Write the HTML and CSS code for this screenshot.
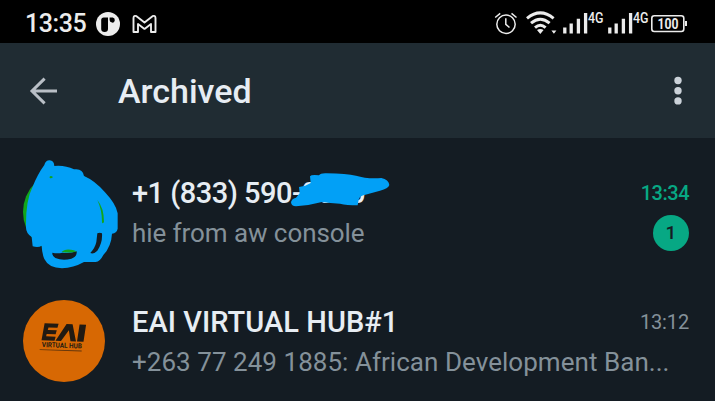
FILE: index.html
```
<!DOCTYPE html>
<html lang="en">
<head>
<meta charset="utf-8">
<title>Archived</title>
<link rel="stylesheet" href="styles.css">
</head>
<body>
<div class="status">
  <span class="clock">13:35</span>
  <svg class="notif" width="24" height="24" viewBox="0 0 24 24"><circle cx="12" cy="12" r="12" fill="#ececec"/><path d="M5.200 8q0-2.500 2.500-2.500h4.300v11.500q0 3-3.400 3-3.400 0-3.400-3zM13.600 5.500h3.200a2.600 2.600 0 1 1-3.200 2.600z" fill="#000"/></svg>
  <svg class="mail" width="25" height="20" viewBox="0 0 25 20"><path d="M1.500 18V4Q1.700 1 4.500 2.200L12.500 8.500l8-6.300q2.800-1.200 3 1.800v14h-4.500V10l-6.500 4.900L6 10v8z" fill="none" stroke="#ececec" stroke-width="1.900" stroke-linejoin="round"/></svg>
  <div class="system">
    <svg width="194" height="26" viewBox="0 0 194 26" fill="none" stroke="#ececec">
      <circle cx="12" cy="14.300" r="9.200" stroke-width="1.500"/><path d="M11.800 8.300v6l3.700 3.200M1.200 7.500l5-4.100M17.500 3.400l5 4.100" stroke-width="1.500"/>
      <path d="M33 8.300q13.300-10.800 26.600 0M37 13.200q9.300-8 18.600 0M41 17.600q5.300-4.600 10.600 0" stroke-width="3"/>
      <path d="M43 20q3.300-2 6.600 0l-3.300 4zM57.400 20.600h5l-2.500 3.100z" fill="#ececec" stroke="none"/>
      <path d="M70.800 17.500v6M77.200 13.500v10M84.400 8.700v14.800M91.600 3v20.500M115.800 17.500v6M122.200 13.500v10M129.400 8.700v14.800M136.600 3v20.500" stroke-width="3.300"/>
      <rect x="157.800" y="5.800" width="32" height="15.700" rx="2.500" stroke-width="1.600"/><path d="M192 11v5" stroke-width="2"/>
      <text class="gen" x="94" y="12.500" textLength="15.500" lengthAdjust="spacingAndGlyphs">4G</text>
      <text class="gen" x="139" y="12.500" textLength="15.500" lengthAdjust="spacingAndGlyphs">4G</text>
      <text class="percent" x="163.500" y="18.800" textLength="21" lengthAdjust="spacingAndGlyphs">100</text>
    </svg>
  </div>
</div>
<header class="bar">
  <svg width="28" height="28" viewBox="0 0 28 28"><path d="M28 14H3M15.600 1.600L3 14l12.600 12.400" fill="none" stroke="#b9bfc6" stroke-width="3"/></svg>
  <h1>Archived</h1>
  <svg class="more" width="8" height="30" viewBox="0 0 8 30" fill="#cbd2d9"><circle cx="4" cy="4.500" r="3.700"/><circle cx="4" cy="14.700" r="3.700"/><circle cx="4" cy="24.900" r="3.700"/></svg>
</header>
<main>
  <section class="chat">
    <div class="avatar">
      <svg class="scribble" width="120" height="130" viewBox="0 0 360 390">
        <circle cx="162" cy="186" r="123" fill="#12a51c"/>
        <path d="M120 300h86l-20 40h-50zM240 308L262 248h30l-15 60-30 20z" fill="#141c23"/>
        <path fill="#02a0f6" fill-rule="evenodd" d="M103 45Q106 31 119 31Q132 32 133 48Q165 45 192 58Q218 54 222 78Q255 92 285 127Q318 162 323 190V236Q320 250 306 251Q304 289 280 315Q270 335 257 336H222Q190 354 156 355Q116 354 103 327Q96 311 95 287Q85 294 68 289L65 261Q47 250 48 230Q47 150 68 110Q83 72 103 45ZM127 308Q143 311 157 308Q178 312 200 304Q202 320 184 326Q158 333 136 324Q126 318 127 308ZM262 250Q269 246 276 250Q278 278 262 302Q250 314 241 309Q255 294 259 276Z"/>
        <path d="M262 150q20 24 20 66-5 8-6 0 0-36-14-66zM155 306q8-10 28-7 8 0 17 5-16 6-45 2zM119 80q3-5 10 1-4 5-10 3z" fill="#12a51c"/>
      </svg>
    </div>
    <div class="body">
      <div class="line"><span class="name phone">+1 (833) 590-0000</span><time class="fresh">13:34</time>
        <svg class="strike" width="120" height="50" viewBox="0 0 360 150"><path fill="#02a0f6" d="M33 112Q34 102 48 98L59 85 57 66 76 62 92 54 90 34Q94 28 117 31Q121 24 140 25Q200 26 228 32 260 42 304 39Q326 44 328 60Q325 71 300 77L256 89Q238 92 236 104L233 121Q200 121 180 116 150 114 126 111 90 121 48 124 34 124 33 112Z"/></svg>
      </div>
      <div class="line"><span class="preview hie">hie from aw console</span><span class="badge">1</span></div>
    </div>
  </section>
  <section class="chat">
    <div class="avatar">
      <svg width="82" height="82" viewBox="0 0 82 82"><circle cx="41" cy="41" r="41" fill="#d76803"/>
        <g transform="rotate(2 41 41)" fill="#211a12"><path d="M21 24h14l-1 4h-9l-.6 2.500h9l-1 4h-9L23 37h9.500l-1 4H18.500zM43 24h6l4 17h-5.500L45.500 30 38 41h-5.500zM56 24h6.500l-2 17h-6.500z"/>
        <text class="hub" x="19" y="47.800" textLength="40" lengthAdjust="spacingAndGlyphs">VIRTUAL HUB</text><path d="M17 50h42v.8H17z" opacity=".65"/></g></svg>
    </div>
    <div class="body">
      <div class="line"><span class="name hubname">EAI VIRTUAL HUB#1</span><time>13:12</time></div>
      <div class="line"><span class="preview long">+263 77 249 1885: African Development Ban...</span></div>
    </div>
  </section>
</main>
</body>
</html>
```
FILE: styles.css
```
* { box-sizing: border-box; }
body { margin: 0; width: 715px; height: 401px; overflow: hidden; background: #141c23; color: #e7edf3; font-family: Roboto, sans-serif; }
svg { display: block; flex: none; }
.status { height: 43px; background: #000; display: flex; align-items: center; padding: 5px 20px 0 25px; }
.clock { color: #ececec; font-size: 25px; font-weight: 500; letter-spacing: -.4px; width: 71px; line-height: 30px; }
.mail { margin-left: 12px; }
.system { margin-left: auto; }
.system svg { margin: 0 7px 2px 0; }
.gen { font: 500 15px Roboto, sans-serif; fill: #ececec; stroke: none; }
.percent { font: 700 14.5px Roboto, sans-serif; fill: #ececec; stroke: none; }
.bar { height: 95px; background: #202c33; display: flex; align-items: center; padding: 0 33px 0 29px; }
h1 { margin: 1px 0 0 61px; font-size: 34px; font-weight: 500; line-height: 40px; }
.more { margin-left: auto; }
main { padding-top: 9px; }
.chat { height: 129px; display: flex; align-items: center; padding: 0 26px 0 23px; }
.avatar { width: 109px; height: 82px; position: relative; flex: none; }
.scribble { position: absolute; left: -13px; top: -21px; }
.body { flex: 1; min-width: 0; padding-top: 2px; }
.line { height: 40px; display: flex; align-items: center; justify-content: space-between; position: relative; white-space: nowrap; }
.name { font-size: 29px; font-weight: 500; line-height: 36px; }
.phone { letter-spacing: -.5px; }
.hubname { letter-spacing: .05px; }
.preview { font-size: 26px; line-height: 34px; color: #84919a; }
.hie { letter-spacing: -.07px; }
.long { letter-spacing: .04px; }
time { font-size: 20px; color: #84919a; letter-spacing: -.15px; }
.fresh { color: #07a884; font-weight: 500; letter-spacing: -.5px; }
.badge { width: 36px; height: 36px; border-radius: 50%; background: #07a884; color: #141c23; font-size: 19px; font-weight: 500; display: flex; align-items: center; justify-content: center; }
.strike { position: absolute; left: 148px; top: -7.5px; }
.hub { font: 700 7px Roboto, sans-serif; }
```
